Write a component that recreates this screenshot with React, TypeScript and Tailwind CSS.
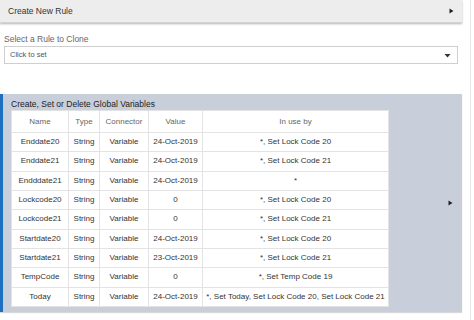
import React from "react";

const rows = [
  ["Enddate20", "String", "Variable", "24-Oct-2019", "*, Set Lock Code 20"],
  ["Enddate21", "String", "Variable", "24-Oct-2019", "*, Set Lock Code 21"],
  ["Endddate21", "String", "Variable", "24-Oct-2019", "*"],
  ["Lockcode20", "String", "Variable", "0", "*, Set Lock Code 20"],
  ["Lockcode21", "String", "Variable", "0", "*, Set Lock Code 21"],
  ["Startdate20", "String", "Variable", "24-Oct-2019", "*, Set Lock Code 20"],
  ["Startdate21", "String", "Variable", "23-Oct-2019", "*, Set Lock Code 21"],
  ["TempCode", "String", "Variable", "0", "*, Set Temp Code 19"],
  ["Today", "String", "Variable", "24-Oct-2019", "*, Set Today, Set Lock Code 20, Set Lock Code 21"],
];

function RightTri() {
  return (
    <svg width="5" height="6" viewBox="0 0 5 6">
      <path d="M0.5 0.5 L4.5 3 L0.5 5.5 Z" fill="#222" />
    </svg>
  );
}

function DownTri() {
  return (
    <svg width="7" height="5" viewBox="0 0 7 5">
      <path d="M0.5 1 L6.5 1 L3.5 4.5 Z" fill="#333" />
    </svg>
  );
}

export default function App() {
  return (
    <div className="w-[474px] h-[320px] bg-white overflow-hidden font-['Liberation_Sans',Arial,sans-serif]">
      <div className="w-[471px] h-[320px] border-r border-[#e6e6e6] pr-[8px]">
        <div className="h-[23px] bg-[#ededed] flex items-center justify-between pl-[8px] pr-[8px] shadow-[0_1px_2px_rgba(0,0,0,0.3)] border-b border-[#d4d4d4]">
          <span className="text-[8.5px] text-[#333]">Create New Rule</span>
          <RightTri />
        </div>
        <div className="pl-[4px] pr-[4px] pt-[11px]">
          <div className="text-[8.5px] leading-[11px] text-[#666]">Select a Rule to Clone</div>
          <div className="mt-[1px] h-[18px] border border-[#cfcfcf] flex items-center justify-between pl-[5px] pr-[6px]">
            <span className="text-[7.5px] text-[#555]">Click to set</span>
            <DownTri />
          </div>
        </div>
        <div className="mt-[30px] h-[218px] bg-[#c9cfda] border-l-[3px] border-[#1d6fc0] flex items-center shadow-[0_1px_1px_rgba(0,0,0,0.15)]">
          <div className="flex flex-col self-start pl-[8px] pt-[5px]">
            <div className="text-[8.5px] leading-[11px] text-[#222]">Create, Set or Delete Global Variables</div>
            <table className="table-fixed border-collapse bg-white w-[377px] text-[8px] text-[#333] text-center">
              <colgroup>
                <col className="w-[57px]" />
                <col className="w-[31px]" />
                <col className="w-[49px]" />
                <col className="w-[54px]" />
                <col className="w-[186px]" />
              </colgroup>
              <thead>
                <tr className="h-[22px] text-[#666]">
                  {["Name", "Type", "Connector", "Value", "In use by"].map((h) => (
                    <th key={h} className="font-normal border border-[#e3e3e3] p-0">{h}</th>
                  ))}
                </tr>
              </thead>
              <tbody>
                {rows.map((r) => (
                  <tr key={r[0]} className="h-[19.33px]">
                    {r.map((c, i) => (
                      <td key={i} className="border border-[#e3e3e3] p-0 whitespace-nowrap">{c}</td>
                    ))}
                  </tr>
                ))}
              </tbody>
            </table>
          </div>
          <div className="flex-1" />
          <div className="pr-[9px]">
            <RightTri />
          </div>
        </div>
      </div>
    </div>
  );
}
